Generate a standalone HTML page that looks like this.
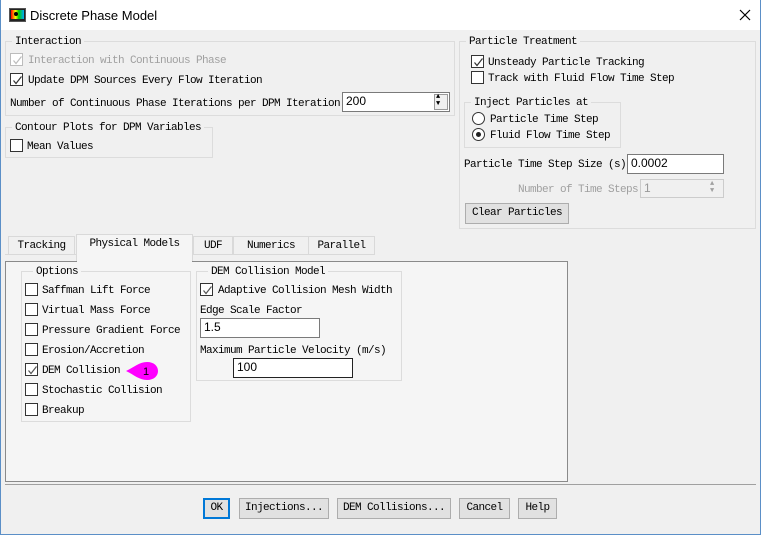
<!DOCTYPE html>
<html><head><style>
*{margin:0;padding:0;box-sizing:border-box}
body{width:761px;height:535px;background:#f0f0f0;position:relative;overflow:hidden;font-family:"Liberation Mono",monospace;font-size:11px;letter-spacing:-0.6px;color:#000}
.a{position:absolute}
.t{position:absolute;white-space:nowrap;line-height:12px;padding-top:1px}
.g{position:absolute;border:1px solid #dcdcdc}
.gl{position:absolute;background:#f0f0f0;padding:1px 3px 0;white-space:nowrap;line-height:12px}
.cb{position:absolute;width:13px;height:13px;border:1px solid #333;background:#fff}
.cb.dis{border-color:#bcbcbc}
.ck{position:absolute;left:1px;top:1px}
.in{position:absolute;background:#fff;border:1px solid #7a7a7a;font-family:"Liberation Sans",sans-serif;font-size:12px;letter-spacing:0;padding-left:3px;line-height:17px}
.btn{position:absolute;background:#e1e1e1;border:1px solid #adadad;text-align:center;line-height:19px}
.rad{position:absolute;width:13px;height:13px;border:1px solid #333;border-radius:50%;background:#fff}
.tab{position:absolute;top:236px;height:18px;border:1px solid #d9d9d9;border-bottom:none;background:#f0f0f0;text-align:center;line-height:18px}
.gray{color:#a0a0a0}
</style></head><body>
<div class="a" style="left:0;top:0;width:761px;height:30px;background:#fff"></div>
<div class="a" style="left:0;top:0;width:1px;height:535px;background:#5b8fc7"></div>
<div class="a" style="right:0;top:0;width:1px;height:535px;background:#5b8fc7"></div>
<div class="a" style="left:0;bottom:0;width:761px;height:1px;background:#5b8fc7"></div>
<div class="a" style="left:9px;top:8px;width:17px;height:14px;background:#222;border:1px solid #555"></div>
<div class="a" style="left:11px;top:10px;width:13px;height:9px;background:linear-gradient(90deg,#f00,#ff0 35%,#0c0 60%,#0af)"></div>
<div class="a" style="left:14px;top:12px;width:4px;height:4px;background:#000;border-radius:50%"></div>
<div class="t" style="left:30px;top:8px;font-family:'Liberation Sans',sans-serif;font-size:13px;letter-spacing:0;line-height:15px;padding:0">Discrete Phase Model</div>
<svg class="a" style="left:739px;top:9px" width="12" height="12"><path d="M1 1L11 11M11 1L1 11" stroke="#000" stroke-width="1.2"/></svg>

<div class="g" style="left:5px;top:41px;width:450px;height:75px"></div>
<div class="gl" style="left:12px;top:35px">Interaction</div>
<div class="cb dis" style="left:10px;top:53px"><svg class="ck" width="11" height="11"><path d="M1.5 5.5L4 8.5L9.5 1.5" stroke="#bcbcbc" fill="none" stroke-width="1.2"/></svg></div>
<div class="t gray" style="left:28px;top:54px">Interaction with Continuous Phase</div>
<div class="cb" style="left:10px;top:73px"><svg class="ck" width="11" height="11"><path d="M1.5 5.5L4 8.5L9.5 1.5" stroke="#333" fill="none" stroke-width="1.2"/></svg></div>
<div class="t" style="left:28px;top:74px">Update DPM Sources Every Flow Iteration</div>
<div class="t" style="left:10px;top:97px">Number of Continuous Phase Iterations per DPM Iteration</div>
<div class="in" style="left:342px;top:92px;width:108px;height:20px">200</div>
<div class="a" style="left:434px;top:94px;width:14px;height:16px;background:#f0f0f0;border:1px solid #999"></div>
<div class="t" style="left:436px;top:93px;font-size:7px;line-height:7px">▲<br>▼</div>

<div class="g" style="left:5px;top:127px;width:208px;height:31px"></div>
<div class="gl" style="left:12px;top:121px">Contour Plots for DPM Variables</div>
<div class="cb" style="left:10px;top:139px"></div>
<div class="t" style="left:27px;top:140px">Mean Values</div>

<div class="g" style="left:459px;top:41px;width:297px;height:188px"></div>
<div class="gl" style="left:466px;top:35px">Particle Treatment</div>
<div class="cb" style="left:471px;top:55px"><svg class="ck" width="11" height="11"><path d="M1.5 5.5L4 8.5L9.5 1.5" stroke="#333" fill="none" stroke-width="1.2"/></svg></div>
<div class="t" style="left:488px;top:56px">Unsteady Particle Tracking</div>
<div class="cb" style="left:471px;top:71px"></div>
<div class="t" style="left:488px;top:72px">Track with Fluid Flow Time Step</div>
<div class="g" style="left:464px;top:102px;width:157px;height:46px"></div>
<div class="gl" style="left:471px;top:96px">Inject Particles at</div>
<div class="rad" style="left:472px;top:112px"></div>
<div class="t" style="left:490px;top:113px">Particle Time Step</div>
<div class="rad" style="left:472px;top:128px"><div class="a" style="left:3px;top:3px;width:5px;height:5px;border-radius:50%;background:#222"></div></div>
<div class="t" style="left:490px;top:129px">Fluid Flow Time Step</div>
<div class="t" style="left:464px;top:158px">Particle Time Step Size (s)</div>
<div class="in" style="left:627px;top:154px;width:97px;height:20px">0.0002</div>
<div class="t gray" style="left:518px;top:183px">Number of Time Steps</div>
<div class="in" style="left:640px;top:179px;width:84px;height:19px;border-color:#ccc;color:#999;background:#f0f0f0">1</div>
<div class="t gray" style="left:710px;top:181px;font-size:7px;line-height:7px;padding:0">▲<br>▼</div>
<div class="btn" style="left:465px;top:203px;width:104px;height:21px">Clear Particles</div>

<div class="a" style="left:5px;top:261px;width:563px;height:221px;background:#f5f5f5;border:1px solid #8a8a8a"></div>
<div class="a" style="left:5px;top:254px;width:370px;height:1px;background:#d9d9d9"></div>
<div class="tab" style="left:8px;width:67px">Tracking</div>
<div class="tab" style="left:193px;width:40px">UDF</div>
<div class="tab" style="left:233px;width:76px">Numerics</div>
<div class="tab" style="left:308px;width:67px">Parallel</div>
<div class="tab" style="left:76px;top:234px;width:117px;height:28px;background:#f5f5f5;line-height:19px">Physical Models</div>
<div class="a" style="left:5px;top:261px;width:72px;height:1px;background:#8a8a8a"></div>
<div class="a" style="left:192px;top:261px;width:376px;height:1px;background:#8a8a8a"></div>

<div class="g" style="left:21px;top:271px;width:170px;height:151px"></div>
<div class="gl" style="left:33px;top:265px;background:#f5f5f5">Options</div>
<div class="cb" style="left:25px;top:283px"></div><div class="t" style="left:42px;top:284px">Saffman Lift Force</div>
<div class="cb" style="left:25px;top:303px"></div><div class="t" style="left:42px;top:304px">Virtual Mass Force</div>
<div class="cb" style="left:25px;top:323px"></div><div class="t" style="left:42px;top:324px">Pressure Gradient Force</div>
<div class="cb" style="left:25px;top:343px"></div><div class="t" style="left:42px;top:344px">Erosion/Accretion</div>
<div class="cb" style="left:25px;top:363px"><svg class="ck" width="11" height="11"><path d="M1.5 5.5L4 8.5L9.5 1.5" stroke="#555" fill="none" stroke-width="1.2"/></svg></div><div class="t" style="left:42px;top:364px">DEM Collision</div>
<div class="cb" style="left:25px;top:383px"></div><div class="t" style="left:42px;top:384px">Stochastic Collision</div>
<div class="cb" style="left:25px;top:403px"></div><div class="t" style="left:42px;top:404px">Breakup</div>
<svg class="a" style="left:125px;top:361px" width="34" height="20"><path d="M1 10C8 7 14 1 22 1C29 1 33 5 33 10C33 15 29 19 22 19C14 19 8 13 1 10Z" fill="#f0f"/><text x="18" y="14" font-family="Liberation Sans" font-size="11" fill="#000">1</text></svg>

<div class="g" style="left:196px;top:271px;width:206px;height:110px"></div>
<div class="gl" style="left:208px;top:265px;background:#f5f5f5">DEM Collision Model</div>
<div class="cb" style="left:200px;top:283px"><svg class="ck" width="11" height="11"><path d="M1.5 5.5L4 8.5L9.5 1.5" stroke="#555" fill="none" stroke-width="1.2"/></svg></div>
<div class="t" style="left:218px;top:284px">Adaptive Collision Mesh Width</div>
<div class="t" style="left:200px;top:304px">Edge Scale Factor</div>
<div class="in" style="left:200px;top:318px;width:120px;height:20px">1.5</div>
<div class="t" style="left:200px;top:344px">Maximum Particle Velocity (m/s)</div>
<div class="in" style="left:233px;top:358px;width:120px;height:20px;border-color:#222">100</div>

<div class="a" style="left:5px;top:484px;width:751px;height:1px;background:#a0a0a0"></div>
<div class="btn" style="left:203px;top:498px;width:27px;height:21px;border:2px solid #0078d7;line-height:17px">OK</div>
<div class="btn" style="left:239px;top:498px;width:90px;height:21px">Injections...</div>
<div class="btn" style="left:337px;top:498px;width:114px;height:21px">DEM Collisions...</div>
<div class="btn" style="left:459px;top:498px;width:51px;height:21px">Cancel</div>
<div class="btn" style="left:518px;top:498px;width:39px;height:21px">Help</div>
</body></html>
